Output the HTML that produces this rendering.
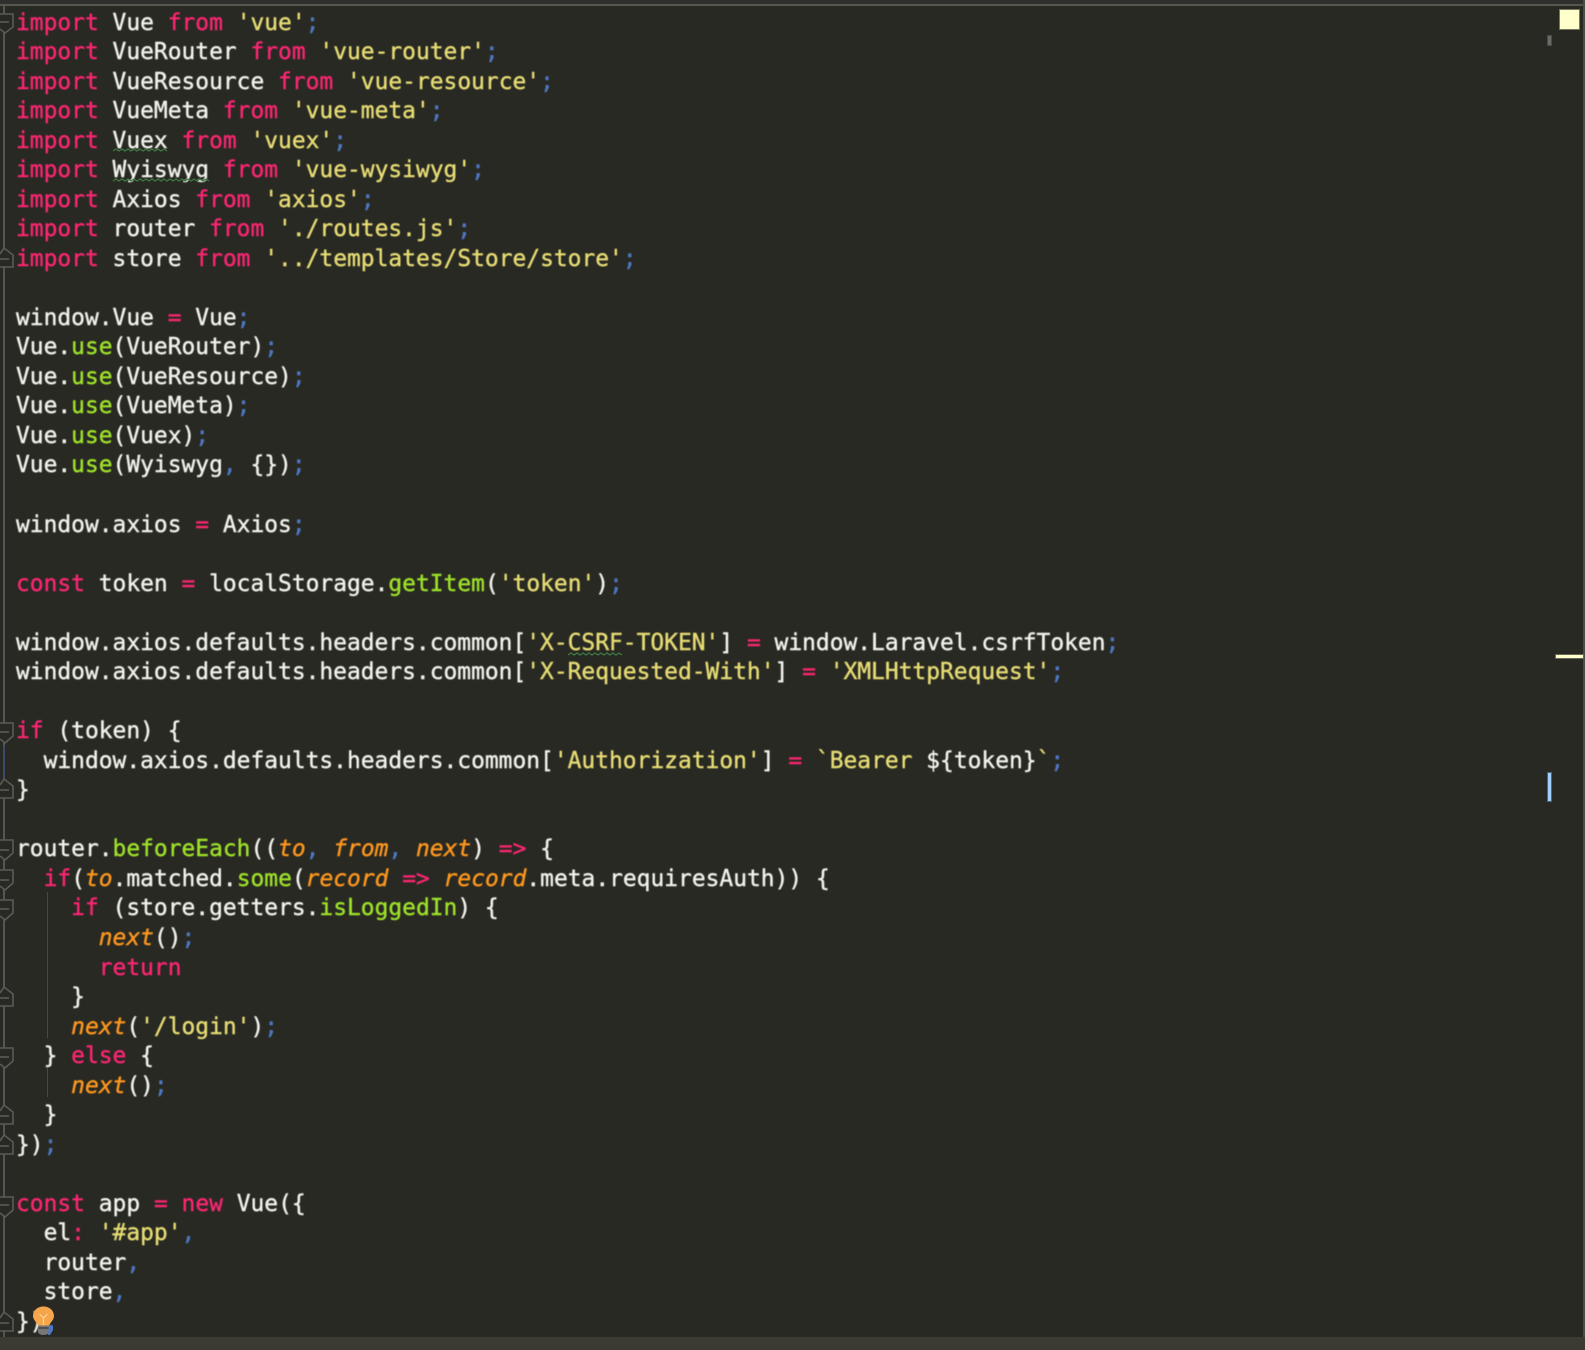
<!DOCTYPE html>
<html><head><meta charset="utf-8"><style>
html,body{margin:0;padding:0;background:#282923;width:1585px;height:1350px;overflow:hidden}
#code{position:absolute;left:16px;top:8.5px;margin:0;font:22.92px/29.53px "DejaVu Sans Mono","Liberation Mono",monospace;color:#f2f2ec;white-space:pre;filter:blur(.4px);-webkit-text-stroke:.4px currentColor}
i{font-style:normal}
.k{color:#f92672}.s{color:#e6db74}.p{color:#4f78c4}.g{color:#9ee02a}.o{color:#fd971f;font-style:italic}
.b{position:absolute}
</style></head><body>
<pre id="code"><i class="k">import</i> Vue <i class="k">from</i> <i class="s">'vue'</i><i class="p">;</i>
<i class="k">import</i> VueRouter <i class="k">from</i> <i class="s">'vue-router'</i><i class="p">;</i>
<i class="k">import</i> VueResource <i class="k">from</i> <i class="s">'vue-resource'</i><i class="p">;</i>
<i class="k">import</i> VueMeta <i class="k">from</i> <i class="s">'vue-meta'</i><i class="p">;</i>
<i class="k">import</i> Vuex <i class="k">from</i> <i class="s">'vuex'</i><i class="p">;</i>
<i class="k">import</i> Wyiswyg <i class="k">from</i> <i class="s">'vue-wysiwyg'</i><i class="p">;</i>
<i class="k">import</i> Axios <i class="k">from</i> <i class="s">'axios'</i><i class="p">;</i>
<i class="k">import</i> router <i class="k">from</i> <i class="s">'./routes.js'</i><i class="p">;</i>
<i class="k">import</i> store <i class="k">from</i> <i class="s">'../templates/Store/store'</i><i class="p">;</i>

window.Vue <i class="k">=</i> Vue<i class="p">;</i>
Vue.<i class="g">use</i>(VueRouter)<i class="p">;</i>
Vue.<i class="g">use</i>(VueResource)<i class="p">;</i>
Vue.<i class="g">use</i>(VueMeta)<i class="p">;</i>
Vue.<i class="g">use</i>(Vuex)<i class="p">;</i>
Vue.<i class="g">use</i>(Wyiswyg<i class="p">,</i> {})<i class="p">;</i>

window.axios <i class="k">=</i> Axios<i class="p">;</i>

<i class="k">const</i> token <i class="k">=</i> localStorage.<i class="g">getItem</i>(<i class="s">'token'</i>)<i class="p">;</i>

window.axios.defaults.headers.common[<i class="s">'X-CSRF-TOKEN'</i>] <i class="k">=</i> window.Laravel.csrfToken<i class="p">;</i>
window.axios.defaults.headers.common[<i class="s">'X-Requested-With'</i>] <i class="k">=</i> <i class="s">'XMLHttpRequest'</i><i class="p">;</i>

<i class="k">if</i> (token) {
  window.axios.defaults.headers.common[<i class="s">'Authorization'</i>] <i class="k">=</i> <i class="s">`Bearer </i>${token}<i class="s">`</i><i class="p">;</i>
}

router.<i class="g">beforeEach</i>((<i class="o">to</i><i class="p">,</i> <i class="o">from</i><i class="p">,</i> <i class="o">next</i>) <i class="k">=&gt;</i> {
  <i class="k">if</i>(<i class="o">to</i>.matched.<i class="g">some</i>(<i class="o">record</i> <i class="k">=&gt;</i> <i class="o">record</i>.meta.requiresAuth)) {
    <i class="k">if</i> (store.getters.<i class="g">isLoggedIn</i>) {
      <i class="o">next</i>()<i class="p">;</i>
      <i class="k">return</i>
    }
    <i class="o">next</i>(<i class="s">'/login'</i>)<i class="p">;</i>
  } <i class="k">else</i> {
    <i class="o">next</i>()<i class="p">;</i>
  }
})<i class="p">;</i>

<i class="k">const</i> app <i class="k">=</i> <i class="k">new</i> Vue({
  el<i class="k">:</i> <i class="s">'#app'</i><i class="p">,</i>
  router<i class="p">,</i>
  store<i class="p">,</i>
})<i class="p">;</i></pre>

<div class="b" style="left:0;top:0;width:1585px;height:4px;background:#2f2f2d"></div>
<div class="b" style="left:0;top:4px;width:1583px;height:2px;background:#555552"></div>
<div class="b" style="left:1583px;top:0;width:2px;height:1350px;background:#4a4a48"></div>
<div class="b" style="left:0;top:1337px;width:1585px;height:13px;background:#3b3b31"></div>
<div class="b" style="left:3px;top:6px;width:2px;height:1331px;background:#555553"></div>
<div class="b" style="left:3px;top:746px;width:2px;height:36px;background:#3c4a6e"></div>

<svg class="b" style="left:0;top:0" width="60" height="1350" fill="#282923" stroke="#5a5a58" stroke-width="1.6">
<path d="M0 14H13V27L5 33L0 29"/><path d="M0 22H9"/>
<path d="M0 254L4 248L13 255V267H0"/><path d="M0 259H9"/>
<path d="M0 723H13V736L5 743L0 739"/><path d="M0 732H9"/>
<path d="M0 785L4 779L13 786V798H0"/><path d="M0 790H9"/>
<path d="M0 840H13V853L5 860L0 856"/><path d="M0 850H9"/>
<path d="M0 870H13V883L5 890L0 886"/><path d="M0 880H9"/>
<path d="M0 900H13V913L5 920L0 916"/><path d="M0 909H9"/>
<path d="M0 993L4 987L13 994V1006H0"/><path d="M0 998H9"/>
<path d="M0 1048H13V1061L5 1068L0 1064"/><path d="M0 1057H9"/>
<path d="M0 1111L4 1105L13 1112V1124H0"/><path d="M0 1116H9"/>
<path d="M0 1141L4 1135L13 1142V1154H0"/><path d="M0 1146H9"/>
<path d="M0 1197H13V1210L5 1217L0 1213"/><path d="M0 1205H9"/>
<path d="M0 1318L4 1312L13 1319V1331H0"/><path d="M0 1323H9"/>
<g stroke="#484942" stroke-width="1" fill="none">
<path d="M47.500 892V1038"/><path d="M75.500 922V980"/><path d="M47.500 1068V1097"/>
</g>
</svg>

<svg class="b" style="left:0;top:0" width="1585" height="1350" fill="none" stroke="#3f7a45" stroke-width="1.2">
<path d="M113 151l3 -2 3 2 3 -2 3 2 3 -2 3 2 3 -2 3 2 3 -2 3 2 3 -2 3 2 3 -2 3 2 3 -2 3 2 3 -2 3 2"/>
<path d="M113 181l3 -2 3 2 3 -2 3 2 3 -2 3 2 3 -2 3 2 3 -2 3 2 3 -2 3 2 3 -2 3 2 3 -2 3 2 3 -2 3 2 3 -2 3 2 3 -2 3 2 3 -2 3 2 3 -2 3 2 3 -2 3 2 3 -2 3 2 3 -2 3 2"/>
<path d="M568 655l3 -2 3 2 3 -2 3 2 3 -2 3 2 3 -2 3 2 3 -2 3 2 3 -2 3 2 3 -2 3 2 3 -2 3 2 3 -2 3 2"/>
</svg>

<div class="b" style="left:1560px;top:10px;width:19px;height:19px;background:#ffffcc;box-shadow:0 0 0 1px #77775c"></div>
<div class="b" style="left:1548px;top:36px;width:3px;height:9px;background:#6a6a68;box-shadow:0 0 0 1px #4a4a46"></div>
<div class="b" style="left:1556px;top:655px;width:27px;height:3px;background:#ffffcc;box-shadow:0 0 0 1px #66665a"></div>
<div class="b" style="left:1548px;top:773px;width:3px;height:28px;background:#9fd0ff;box-shadow:0 0 0 1px #4c6278"></div>

<svg class="b" style="left:32px;top:1306px" width="24" height="30" viewBox="0 0 24 30">
<path d="M11.500 0.500C5.500 0.500 1 4.500 1 10C1 13.500 4 15.500 6 19.500H17C19 15.500 22 13.500 22 10C22 4.500 17.500 0.500 11.500 0.500Z" fill="#f5a54a"/>
<path d="M7.500 8L11.500 12L15.500 8M11.500 12V19" fill="none" stroke="#ffd596" stroke-width="1.2"/>
<path d="M6 19.500H17V21.500H6Z" fill="#77777a"/>
<path d="M6 22.500H17V25.500C17 27.500 15 29 11.500 29C8 29 6 27.500 6 25.500Z" fill="#77777a"/>
<path d="M17 19.500H21V24L18 29H16Z" fill="#4f78c4"/>
</svg>
</body></html>
